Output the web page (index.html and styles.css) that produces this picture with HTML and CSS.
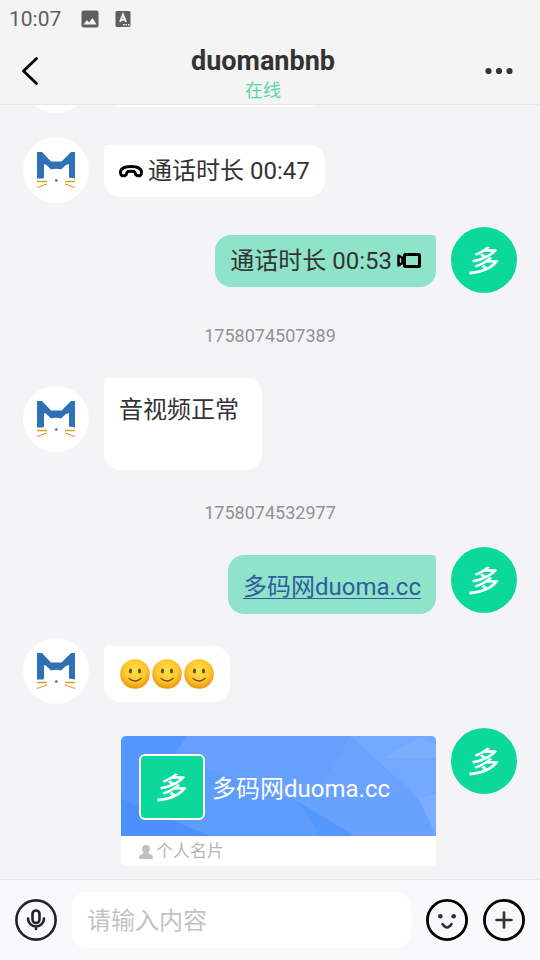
FILE: index.html
```html
<!DOCTYPE html>
<html lang="zh-CN">
<head>
<meta charset="utf-8">
<meta name="viewport" content="width=device-width, initial-scale=1">
<title>duomanbnb</title>
<link rel="stylesheet" href="styles.css">
</head>
<body>
<svg class="defs" aria-hidden="true">
  <defs>
    <radialGradient id="face" cx="50%" cy="40%" r="60%">
      <stop offset="0" stop-color="#ffe04a"/>
      <stop offset="0.6" stop-color="#fdc82c"/>
      <stop offset="1" stop-color="#ee9212"/>
    </radialGradient>
    <symbol id="cat" viewBox="0 0 66 66">
      <path fill="#2f70b7" d="M14 15h5l9 9.500h10.500L48 15h4v26.500l-6-1V27l-3 1-5 4.500q-5-1.500-10 0L23.500 28 21 27v13.500l-1 1H14z"/>
      <path fill="none" stroke="#e0a02a" stroke-width="1.300" d="M14 44.500h10M14 50.500l10-3.500M52 44.500H42M52 50.500L42 47"/>
      <circle cx="33.300" cy="43.500" r="1.300" fill="#53677c"/>
    </symbol>
    <symbol id="smile" viewBox="0 0 30 30">
      <circle cx="15" cy="15" r="14.800" fill="url(#face)"/>
      <ellipse cx="10.500" cy="12" rx="1.500" ry="2.500" fill="#6d4316"/>
      <ellipse cx="19.500" cy="12" rx="1.500" ry="2.500" fill="#6d4316"/>
      <path fill="none" stroke="#7c4a12" stroke-width="1.300" stroke-linecap="round" d="M9 19.500q6 5 12 0"/>
    </symbol>
  </defs>
</svg>
<div class="app">
  <header class="header">
    <div class="status">
      <span>10:07</span>
      <svg class="status-icon" viewBox="0 0 18 18"><rect x="0.500" y="0.500" width="17" height="17" rx="2" fill="#5f5f5f"/><path fill="#f4f4f4" d="M2.500 14.500l3.500-4.500 2 2.500L11.500 8l4 6.500z"/></svg>
      <svg class="status-icon" viewBox="0 0 18 18"><rect x="1.500" y="1" width="15" height="16" rx="1.500" fill="#5f5f5f"/><path fill="none" stroke="#f4f4f4" stroke-width="1.900" d="M6 12L9 4.500 12 12M7 9.800h4"/><path fill="#f4f4f4" d="M9 14h1.500v1.500H9zM11.500 14H13v1.500h-1.500zM14 14h1.500v1.500H14z"/></svg>
    </div>
    <nav class="nav">
      <button class="nav-button" type="button" aria-label="返回">
        <svg width="32" height="32" viewBox="0 0 32 32"><path fill="none" stroke="#000" stroke-width="2.800" stroke-linecap="round" stroke-linejoin="round" d="M25.500 3.500L12.500 16 25.500 28.500"/></svg>
      </button>
      <div class="peer">
        <h1 class="peer-name">duomanbnb</h1>
        <span class="peer-state">在线</span>
      </div>
      <button class="nav-button" type="button" aria-label="更多">
        <svg width="32" height="32" viewBox="0 0 32 32"><g fill="#333"><circle cx="5.500" cy="16" r="3.100"/><circle cx="16" cy="16" r="3.100"/><circle cx="26.500" cy="16" r="3.100"/></g></svg>
      </button>
    </nav>
  </header>

  <main class="chat">
    <div class="message">
      <svg class="avatar avatar-cat"><use href="#cat"/></svg>
      <div class="bubble bubble-past"></div>
    </div>
    <div class="message">
      <svg class="avatar avatar-cat"><use href="#cat"/></svg>
      <div class="bubble">
        <svg class="call-icon" viewBox="0 0 24 24"><path fill="none" stroke="#000" stroke-width="3" stroke-linejoin="round" d="M1.500 13.500C1.500 9 6 7.500 12 7.500S22.500 9 22.500 13.500C22.500 17 20.500 17.200 18 16.500 15.500 16 17 13 15 12.500Q12 11.800 9 12.500C7 13 8.500 16 6 16.500 3.500 17.200 1.500 17 1.500 13.500z"/></svg>
        <span>通话时长 00:47</span>
      </div>
    </div>
    <div class="message mine">
      <span class="avatar avatar-duo">多</span>
      <div class="bubble">
        <span>通话时长 00:53</span>
        <svg class="call-icon" viewBox="0 0 24 24"><g fill="none" stroke="#000" stroke-width="3" stroke-linejoin="round"><rect x="7.500" y="5.500" width="15" height="12" rx="1"/><path stroke-width="2.500" d="M1.500 6.500v10l4-2.500V9z"/></g></svg>
      </div>
    </div>
    <time class="stamp">1758074507389</time>
    <div class="message tall">
      <svg class="avatar avatar-cat"><use href="#cat"/></svg>
      <div class="bubble">音视频正常</div>
    </div>
    <time class="stamp">1758074532977</time>
    <div class="message mine">
      <span class="avatar avatar-duo">多</span>
      <div class="bubble bubble-link"><a href="#duoma">多码网duoma.cc</a></div>
    </div>
    <div class="message">
      <svg class="avatar avatar-cat"><use href="#cat"/></svg>
      <div class="bubble bubble-emoji">
        <svg class="emoji"><use href="#smile"/></svg>
        <svg class="emoji"><use href="#smile"/></svg>
        <svg class="emoji"><use href="#smile"/></svg>
      </div>
    </div>
    <div class="message mine">
      <span class="avatar avatar-duo">多</span>
      <article class="card">
        <div class="card-top">
          <svg class="card-art" viewBox="0 0 315 100" preserveAspectRatio="none">
            <rect width="315" height="100" fill="#5498fd"/>
            <path fill="#669ffd" d="M66 0h163l-30 50-20 17-80 33H89L30 76l22-56z"/>
            <path fill="#5e9cfe" d="M52 20l127 47 20 33H89L28 75z"/>
            <path fill="#4b90fb" d="M0 63l89 37H0z"/>
            <path fill="#68a2ff" d="M142 44l57 6 98 12 18 38h-81l-55-33z"/>
            <path fill="#6ca1fe" d="M229 0l68 62-98-12z"/>
            <path fill="#73a8ff" d="M229 0h86v57l-18 5z"/>
            <path fill="#7cadff" d="M262 22l35-20 18 6v14zM297 62l18-5v43z"/>
          </svg>
          <span class="card-avatar">多</span>
          <strong class="card-name">多码网duoma.cc</strong>
        </div>
        <div class="card-foot">
          <svg width="14" height="16" viewBox="0 0 14 16"><path fill="#c0c1c3" d="M7 1a4 4 0 0 1 4 4c0 2-1 3-2 4l4 2q1 1 1 4H0q0-3 1-4l4-2C4 8 3 7 3 5a4 4 0 0 1 4-4z"/></svg>
          <span>个人名片</span>
        </div>
      </article>
    </div>
  </main>

  <footer class="composer">
    <button class="round-button" type="button" aria-label="语音">
      <svg viewBox="0 0 42 42"><g fill="none" stroke="#222427" stroke-width="2.600" stroke-linecap="round"><circle cx="21" cy="21" r="19.600"/><rect x="17.500" y="11.500" width="7" height="12.500" rx="3.500"/><path d="M13 19.500a8 8 0 0 0 16 0M21 27.500V30"/></g></svg>
    </button>
    <input class="field" type="text" placeholder="请输入内容" aria-label="请输入内容">
    <button class="round-button" type="button" aria-label="表情">
      <svg viewBox="0 0 42 42"><circle cx="21" cy="21" r="19.600" fill="none" stroke="#000" stroke-width="2.800"/><circle cx="14.300" cy="17.300" r="2.300" fill="#333"/><circle cx="27.700" cy="17.300" r="2.300" fill="#333"/><path fill="none" stroke="#333" stroke-width="2.600" stroke-linecap="round" d="M16.500 25q4.500 7 9 0"/></svg>
    </button>
    <button class="round-button" type="button" aria-label="添加">
      <svg viewBox="0 0 42 42"><circle cx="21" cy="21" r="19.600" fill="none" stroke="#000" stroke-width="2.800"/><path fill="none" stroke="#333" stroke-width="2.700" stroke-linecap="round" d="M13.500 21h15M21 13.500v15"/></svg>
    </button>
  </footer>
</div>
</body>
</html>
```
FILE: styles.css
```css
* {
  box-sizing: border-box;
}

body {
  margin: 0;
  font-family: Roboto, "Noto Sans CJK SC", sans-serif;
  font-size: 24px;
  line-height: 32px;
  color: #333;
  background: #f4f4f7;
}

button {
  padding: 0;
  border: 0;
  background: none;
  cursor: pointer;
}

svg {
  display: block;
  flex: none;
}

.defs {
  position: absolute;
  width: 0;
  height: 0;
}

.app {
  display: flex;
  flex-direction: column;
  height: 100vh;
}

.header {
  flex: none;
  background: #f4f4f4;
  border-bottom: 1px solid #e6e6e6;
}

.status {
  display: flex;
  align-items: center;
  gap: 15px;
  height: 37px;
  padding: 0 9px;
  font-size: 21px;
  color: #5f5f5f;
}

.status span {
  margin-right: 5px;
}

.status-icon {
  width: 18px;
  height: 18px;
}

.nav {
  display: flex;
  align-items: center;
  justify-content: space-between;
  height: 67px;
  padding: 0 25px 0 11px;
}

.nav-button {
  width: 32px;
  height: 32px;
}

.peer {
  display: flex;
  flex-direction: column;
  align-items: center;
  padding-top: 8px;
}

.peer-name {
  margin: 0;
  font-size: 27px;
  font-weight: 700;
  line-height: 32px;
}

.peer-state {
  font-size: 18px;
  line-height: 28px;
  color: #5bd6a4;
}

.chat {
  display: flex;
  flex: 1;
  flex-direction: column;
  justify-content: flex-end;
  gap: 24px;
  min-height: 0;
  padding: 0 23px 13px;
  overflow: hidden;
}

.message {
  display: flex;
  flex: none;
  align-items: flex-start;
  gap: 15px;
}

.mine {
  flex-direction: row-reverse;
}

.avatar {
  flex: none;
  width: 66px;
  height: 66px;
  border-radius: 50%;
}

.avatar-cat {
  background: #fff;
}

.avatar-duo,
.card-avatar {
  display: flex;
  align-items: center;
  justify-content: center;
  padding: 3px 4px 0 0;
  font-size: 30px;
  font-style: italic;
  font-weight: 500;
  color: #fff;
  background: #0bd99b;
}

.bubble {
  display: flex;
  align-items: center;
  gap: 5px;
  margin-top: 8px;
  padding: 10px 15px;
  border-radius: 4px 16px 16px 16px;
  background: #fff;
}

.mine .bubble {
  border-radius: 16px 4px 16px 16px;
  background: #8fe3c8;
}

.bubble-past {
  width: 220px;
  height: 52px;
}

.call-icon {
  width: 24px;
  height: 24px;
}

.tall {
  margin-top: 8px;
}

.tall .avatar {
  margin-top: 8px;
}

.tall .bubble {
  align-items: flex-start;
  min-height: 92px;
  margin-top: 0;
  padding: 16px 23px 15px 15px;
}

.bubble-link {
  padding: 16px 15px 11px;
}

.bubble-link a {
  color: #2f5d9f;
  text-decoration-thickness: 1px;
  text-underline-offset: 3px;
}

.bubble-emoji {
  gap: 2px;
  padding: 13px 16px;
}

.emoji {
  width: 30px;
  height: 30px;
}

.stamp {
  flex: none;
  padding-top: 8px;
  font-size: 18px;
  line-height: 21px;
  color: #919193;
  text-align: center;
}

.card {
  flex: 0 1 315px;
  margin-top: 8px;
  overflow: hidden;
  border-radius: 5px;
  background: #fff;
}

.card-top {
  position: relative;
  display: flex;
  align-items: center;
  gap: 7px;
  padding: 18px 18px 16px;
}

.card-art {
  position: absolute;
  inset: 0;
  width: 100%;
  height: 100%;
}

.card-avatar {
  position: relative;
  width: 66px;
  height: 66px;
  border: 2px solid #fff;
  border-radius: 6px;
}

.card-name {
  position: relative;
  padding-top: 4px;
  font-weight: 400;
  color: #fff;
}

.card-foot {
  display: flex;
  align-items: center;
  gap: 3px;
  padding: 1px 18px 0;
  font-size: 17px;
  line-height: 29px;
  color: #b4b5b7;
}

.composer {
  display: flex;
  flex: none;
  align-items: center;
  gap: 15px;
  padding: 12px 15px;
  border-top: 1px solid #e5e5e8;
  background: #f9f9fb;
}

.round-button {
  flex: none;
  width: 42px;
  height: 42px;
}

.field {
  flex: 1;
  min-width: 0;
  height: 56px;
  padding: 2px 15px 0;
  border: 0;
  border-radius: 15px;
  outline: 0;
  font: inherit;
  color: #333;
  background: #fff;
}

.field::placeholder {
  color: #c3c3c5;
  opacity: 1;
}
```
